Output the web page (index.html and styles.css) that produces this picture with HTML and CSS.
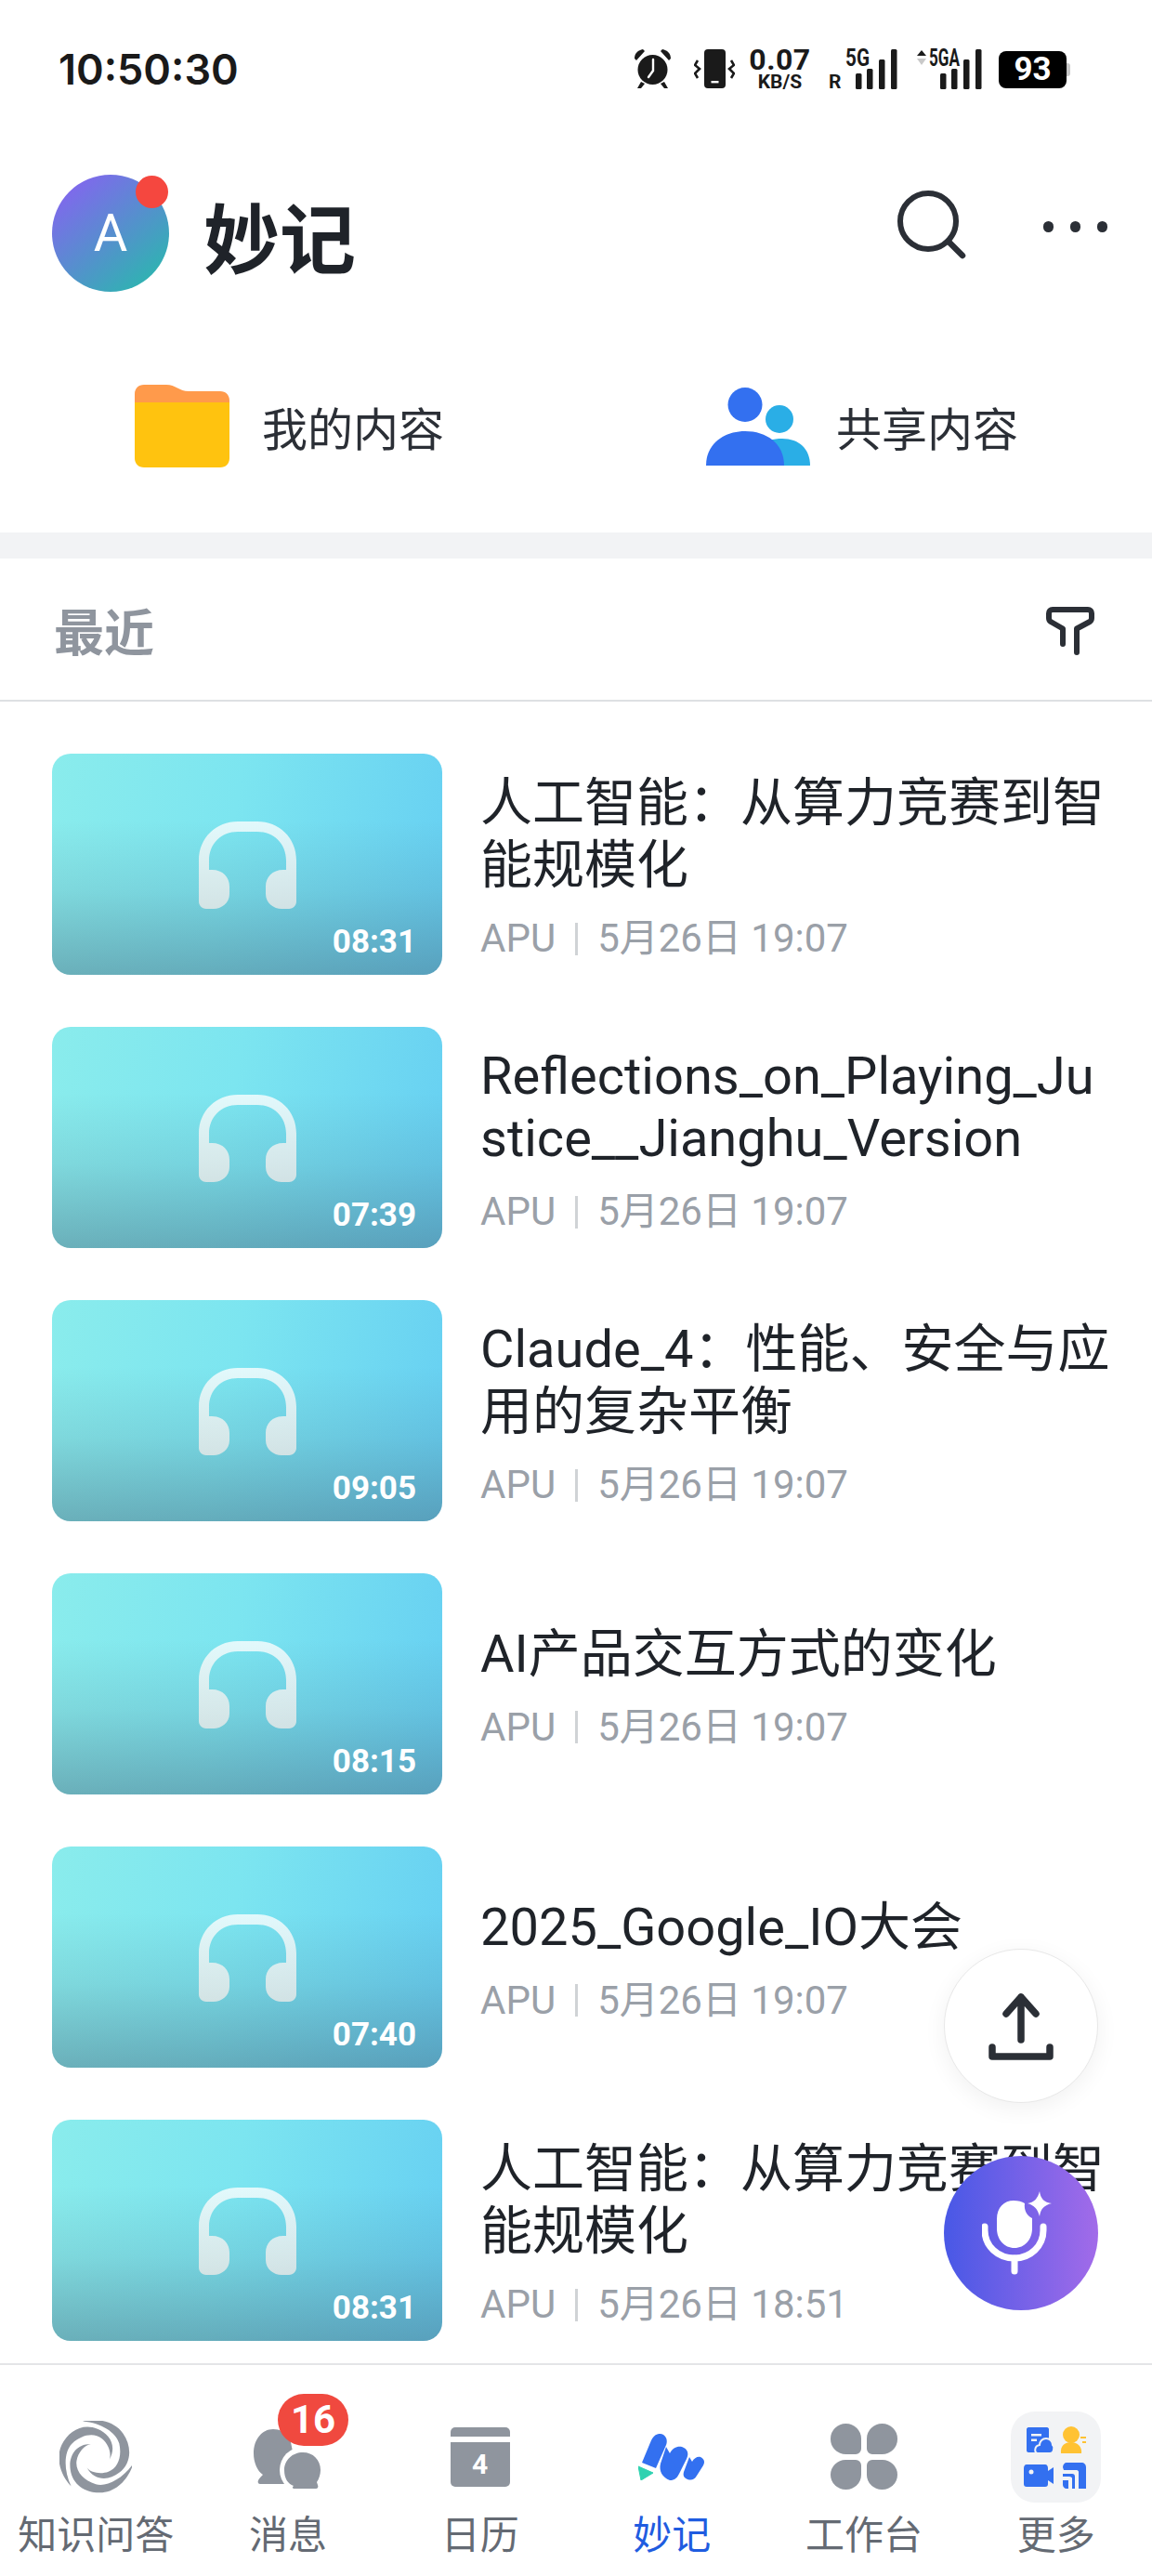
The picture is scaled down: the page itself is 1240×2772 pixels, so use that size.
FILE: index.html
```html
<!DOCTYPE html>
<html lang="zh-CN">
<head>
    <meta charset="UTF-8">
    <meta name="viewport" content="width=device-width, initial-scale=1.0">
    <title>妙记</title>
    <link rel="stylesheet" href="styles.css">
</head>
<body>
    <svg class="defs" width="0" height="0">
        <symbol id="phones" viewBox="0 0 105 94">
            <defs>
                <linearGradient id="phonesFill" x1="0" y1="0" x2="0" y2="1">
                    <stop offset="0" stop-color="#fff" stop-opacity=".78"/>
                    <stop offset="1" stop-color="#eeeae8" stop-opacity=".78"/>
                </linearGradient>
            </defs>
            <path fill="url(#phonesFill)" d="M0 86V42C0 17 19 0 42 0H63C86 0 105 17 105 42V86C105 90 102 94 97 94H89C81 94 72 88 72 78V70C72 60 79 52 91 52H94V42C94 24 81 11 63 11H42C24 11 11 24 11 42V52H14C26 52 33 60 33 70V78C33 88 24 94 16 94H8C3 94 0 90 0 86Z"/>
        </symbol>
        <symbol id="blade" viewBox="0 0 78 78" overflow="visible">
            <path d="M25.700 2.400C40 -1 58 2 67 15C76 28 76 45 63 55C53 63 38 64 30 50C34 55 44 57 52 54C62 50 66 38 63 25C60 14 45 4 25.700 2.400Z"/>
        </symbol>
    </svg>

    <div class="app">
        <div class="statusbar">
            <div class="clock">10:50:30</div>
            <div class="status-icons">
                <svg class="ic-alarm" width="43" height="44" viewBox="0 0 43 44">
                    <circle cx="21.500" cy="23" r="16" fill="#1a1a1a"/>
                    <path d="M2 11C2 5 6 2 11 1L13 3 4 13Z M41 11C41 5 37 2 32 1L30 3 39 13Z" fill="#1a1a1a"/>
                    <path d="M9 36L5 43H9L13 38Z M34 36L38 43H34L30 38Z" fill="#1a1a1a"/>
                    <path d="M22 12V24L17 31" fill="none" stroke="#fff" stroke-width="2.400" stroke-linecap="round"/>
                </svg>
                <svg class="ic-vibrate" width="44" height="42" viewBox="0 0 44 42">
                    <rect x="11" y="0" width="23" height="42" rx="4" fill="#1a1a1a"/>
                    <rect x="18.500" y="34" width="8" height="2.400" fill="#fff"/>
                    <path d="M4 12L1 17 6 21 1 26 4 31M40 12L43 17 38 21 43 26 40 31" fill="none" stroke="#1a1a1a" stroke-width="2.600"/>
                </svg>
                <div class="speed">
                    <span class="speed-num">0.07</span>
                    <span class="speed-unit">KB/S</span>
                </div>
                <svg class="ic-net ic-net1" width="74" height="44" viewBox="0 0 74 44">
                    <text x="0" y="43" class="net-r">R</text>
                    <text x="18" y="19" class="net-g" textLength="26" lengthAdjust="spacingAndGlyphs">5G</text>
                    <rect x="29" y="27" width="6.500" height="17" rx="1.500"/>
                    <rect x="41" y="22" width="6.500" height="22" rx="1.500"/>
                    <rect x="54" y="12" width="6.500" height="32" rx="1.500"/>
                    <rect x="67" y="1" width="6.500" height="43" rx="1.500"/>
                </svg>
                <svg class="ic-net ic-net2" width="71" height="44" viewBox="0 0 71 44">
                    <path d="M1 8L6 2 11 8Z" fill="#1a1a1a"/>
                    <path d="M1 11L6 18 11 11Z" fill="#c9c9c9"/>
                    <text x="14" y="19" class="net-g" textLength="33" lengthAdjust="spacingAndGlyphs">5GA</text>
                    <rect x="26" y="27" width="6.500" height="17" rx="1.500"/>
                    <rect x="38" y="22" width="6.500" height="22" rx="1.500"/>
                    <rect x="51" y="12" width="6.500" height="32" rx="1.500"/>
                    <rect x="64" y="1" width="6.500" height="43" rx="1.500"/>
                </svg>
                <div class="battery">93</div>
                <div class="battery-cap"></div>
            </div>
        </div>

        <div class="header">
            <div class="avatar">A<span class="avatar-dot"></span></div>
            <h1 class="title">妙记</h1>
            <svg class="ic-search" width="74" height="74" viewBox="0 0 74 74">
                <circle cx="33" cy="33" r="30" fill="none" stroke="#2b2f36" stroke-width="6"/>
                <path d="M55 55L70 70" stroke="#2b2f36" stroke-width="6.500" stroke-linecap="round"/>
            </svg>
            <div class="more-dots"><i></i><i></i><i></i></div>
        </div>

        <div class="quick">
            <div class="quick-item quick-mine">
                <svg width="102" height="89" viewBox="0 0 102 89">
                    <path d="M0 30V10C0 4 4 0 10 0H34C44 0 48 7 58 7H92C98 7 102 11 102 17V30Z" fill="#ff9a4b"/>
                    <path d="M0 19H102V79C102 85 98 89 92 89H10C4 89 0 85 0 79Z" fill="#ffc30f"/>
                </svg>
                <span class="quick-label">我的内容</span>
            </div>
            <div class="quick-item quick-shared">
                <svg width="112" height="84" viewBox="0 0 112 84">
                    <circle cx="79" cy="34" r="15" fill="#2aaee6"/>
                    <path d="M50 84C50 64 62 55 82 55C100 55 112 66 112 84Z" fill="#2aaee6"/>
                    <circle cx="42" cy="18.500" r="18.500" fill="#3370f0"/>
                    <path d="M0 84C0 60 20 47 42 47C65 47 84 60 84 84Z" fill="#3370f0"/>
                </svg>
                <span class="quick-label">共享内容</span>
            </div>
        </div>

        <div class="band"></div>

        <div class="recent-head">
            <span class="recent-title">最近</span>
            <svg width="52" height="52" viewBox="0 0 52 52">
                <path d="M18 40V23.500L5 16C3.500 15 3 14 3 12V7C3 4.500 4.500 3 7 3H45C47.500 3 49 4.500 49 7V12C49 14 48.500 15 47 16L33 23.500V49" fill="none" stroke="#2b2f36" stroke-width="6" stroke-linecap="round" stroke-linejoin="round"/>
            </svg>
        </div>

        <div class="list">
            <div class="row">
                <div class="thumb"><svg class="phones"><use href="#phones"/></svg><span class="dur">08:31</span></div>
                <div class="info">
                    <div class="name">人工智能：从算力竞赛到智能规模化</div>
                    <div class="meta"><span>APU</span><i class="sep"></i><span>5月26日 19:07</span></div>
                </div>
            </div>
            <div class="row">
                <div class="thumb"><svg class="phones"><use href="#phones"/></svg><span class="dur">07:39</span></div>
                <div class="info">
                    <div class="name">Reflections_on_Playing_Justice__Jianghu_Version</div>
                    <div class="meta"><span>APU</span><i class="sep"></i><span>5月26日 19:07</span></div>
                </div>
            </div>
            <div class="row">
                <div class="thumb"><svg class="phones"><use href="#phones"/></svg><span class="dur">09:05</span></div>
                <div class="info">
                    <div class="name">Claude_4：性能、安全与应用的复杂平衡</div>
                    <div class="meta"><span>APU</span><i class="sep"></i><span>5月26日 19:07</span></div>
                </div>
            </div>
            <div class="row">
                <div class="thumb"><svg class="phones"><use href="#phones"/></svg><span class="dur">08:15</span></div>
                <div class="info">
                    <div class="name">AI产品交互方式的变化</div>
                    <div class="meta"><span>APU</span><i class="sep"></i><span>5月26日 19:07</span></div>
                </div>
            </div>
            <div class="row">
                <div class="thumb"><svg class="phones"><use href="#phones"/></svg><span class="dur">07:40</span></div>
                <div class="info">
                    <div class="name">2025_Google_IO大会</div>
                    <div class="meta"><span>APU</span><i class="sep"></i><span>5月26日 19:07</span></div>
                </div>
            </div>
            <div class="row">
                <div class="thumb"><svg class="phones"><use href="#phones"/></svg><span class="dur">08:31</span></div>
                <div class="info">
                    <div class="name">人工智能：从算力竞赛到智能规模化</div>
                    <div class="meta"><span>APU</span><i class="sep"></i><span>5月26日 18:51</span></div>
                </div>
            </div>
        </div>

        <div class="fab fab-upload">
            <svg width="70" height="74" viewBox="0 0 70 74">
                <path d="M35 6V52M19 24L35 6 51 24" fill="none" stroke="#2b2f36" stroke-width="7.500" stroke-linecap="round" stroke-linejoin="round"/>
                <path d="M4 60V70H66V60" fill="none" stroke="#2b2f36" stroke-width="7.500" stroke-linecap="round" stroke-linejoin="round"/>
            </svg>
        </div>
        <div class="fab fab-mic">
            <svg width="84" height="90" viewBox="0 0 84 90">
                <path d="M16 30C16 17 24 10 34 10C39 10 43 11 46 13C45 20 48 26 54 29V40C54 52 46 61 35 61C24 61 16 52 16 40Z" fill="#fff"/>
                <path d="M3 38V42C3 59 17 72 35 72C52 72 66 59 66 42V38" fill="none" stroke="#fff" stroke-width="7" stroke-linecap="round"/>
                <path d="M35 72V86" stroke="#fff" stroke-width="7" stroke-linecap="round"/>
                <path d="M62 0C63 8 67 12 75 13C67 15 63 19 62 27C60 19 56 15 49 13C56 12 60 8 62 0Z" fill="#fff"/>
            </svg>
        </div>

        <div class="nav">
            <div class="tab">
                <div class="tab-icon">
                    <svg width="78" height="78" viewBox="2 2 74 74">
                        <g fill="#8f959e">
                            <use href="#blade" width="78" height="78"/>
                            <use href="#blade" width="78" height="78" transform="rotate(120 39 39)"/>
                            <use href="#blade" width="78" height="78" transform="rotate(240 39 39)"/>
                        </g>
                    </svg>
                </div>
                <span class="tab-label">知识问答</span>
            </div>
            <div class="tab">
                <div class="tab-icon tab-msg">
                    <svg width="74" height="66" viewBox="0 0 74 66">
                        <path d="M22 1C10 1 1 12 1 27C1 37 5 46 11 50C9 52 7 54 6 56C5 58 6 60 8 60H44V30L40 10C35 4 29 1 22 1Z" fill="#8f959e"/>
                        <circle cx="54" cy="45" r="25" fill="#fff"/>
                        <path d="M54 26C43 26 34 34 34 45C34 54 38 60 44 62C43 63 42 64 44 65H68C70 65 71 63 70 61L69 58C71 55 73 50 73 45C73 34 65 26 54 26Z" fill="#8f959e"/>
                    </svg>
                    <span class="badge">16</span>
                </div>
                <span class="tab-label">消息</span>
            </div>
            <div class="tab">
                <div class="tab-icon">
                    <div class="cal">
                        <div class="cal-top"></div>
                        <div class="cal-body">4</div>
                    </div>
                </div>
                <span class="tab-label">日历</span>
            </div>
            <div class="tab">
                <div class="tab-icon">
                    <svg width="72" height="50" viewBox="0 0 72 50">
                        <path d="M4 31L14 7C17 1 20 0 24 0C30 1 32 7 30 12L19 37Z" fill="#3370f0"/>
                        <path d="M24 32L30 14 34 21C37 15 42 13 47 14C53 16 55 21 52 27L44 43C41 49 38 50 34 50C26 47 22 40 24 32Z" fill="#3370f0"/>
                        <path d="M49 41L55 25 58 30C60 26 64 24 67 25C71 27 72 30 70 34L63 45C60 50 57 50 53 49C49 47 48 45 49 41Z" fill="#3370f0"/>
                        <path d="M0 35L16 42 3 50Z" fill="#2fd2b0" stroke="#2fd2b0" stroke-linejoin="round"/>
                    </svg>
                </div>
                <span class="tab-label tab-on">妙记</span>
            </div>
            <div class="tab">
                <div class="tab-icon">
                    <div class="petals"><i></i><i></i><i></i><i></i></div>
                </div>
                <span class="tab-label">工作台</span>
            </div>
            <div class="tab">
                <div class="tab-icon">
                    <div class="more-tile">
                        <svg width="97" height="98" viewBox="0 0 97 98">
                            <g fill="#3370f0">
                                <path d="M17 19C17 18 18 17 19 17H39C40 17 41 18 41 19V44H19C18 44 17 43 17 42Z"/>
                                <path d="M22 24H33V26.500H22ZM22 29.500H28V32H22Z" fill="#f2f3f5"/>
                                <path d="M31 36A7 7 0 0 1 38 29A7 7 0 0 1 45 36C47 37 47 45 42 45H29C25 45 25 37 31 36Z" stroke="#f2f3f5" stroke-width="2"/>
                                <path d="M14 61C14 59 15 57 17 57H37C39 57 40 59 40 61V64L46 60V78L40 74V78C40 80 39 81 37 81H17C15 81 14 80 14 78Z"/>
                                <circle cx="22" cy="65" r="2.500" fill="#f2f3f5"/>
                                <path d="M56 60C56 57 58 55 60 55H76C79 55 81 57 81 60V83H73V65C73 64 72 63 71 63H57ZM56 67H66C68 67 69 68 69 70V83H60C58 83 56 81 56 79Z"/>
                                <path d="M56 70H63C65 70 66 71 66 72V83H62V74H56Z" fill="#f2f3f5"/>
                            </g>
                            <g fill="#ffc233">
                                <circle cx="65" cy="25" r="9"/>
                                <path d="M54 45C53 37 58 33 65 33C72 33 77 38 76 45Z"/>
                                <path d="M75 27H81V29H75ZM77 32H81V34H77Z"/>
                            </g>
                        </svg>
                    </div>
                </div>
                <span class="tab-label">更多</span>
            </div>
        </div>
    </div>
</body>
</html>
```

FILE: styles.css
```css
* {
    box-sizing: border-box;
}
body {
    margin: 0;
    background-color: #fff;
    font-family: Roboto, "Noto Sans CJK SC", sans-serif;
    color: #1f2329;
}
.defs {
    display: block;
    height: 0;
}
.app {
    position: relative;
    width: 1240px;
    height: 2772px;
    display: flex;
    flex-direction: column;
    overflow: hidden;
}

/* status bar */
.statusbar {
    height: 155px;
    padding: 52px 88px 0 63px;
    display: flex;
    justify-content: space-between;
    align-items: flex-start;
}
.clock {
    font-family: Inter, sans-serif;
    font-size: 45px;
    font-weight: 600;
    line-height: 46px;
    color: #1a1a1a;
}
.status-icons {
    display: flex;
    align-items: flex-start;
    color: #1a1a1a;
}
.ic-vibrate {
    margin: 1px 0 0 23px;
}
.speed {
    margin-left: 16px;
    width: 65px;
    display: flex;
    flex-direction: column;
    align-items: center;
    font-weight: 700;
}
.speed-num {
    font-size: 32px;
    line-height: 24px;
    letter-spacing: 0.5px;
}
.speed-unit {
    font-size: 21px;
    line-height: 19px;
    margin-top: 3px;
}
.ic-net {
    margin-left: 20px;
    fill: #1a1a1a;
    overflow: visible;
}
.net-r {
    font-size: 21px;
    font-weight: 700;
}
.net-g {
    font-size: 25px;
    font-weight: 700;
}
.battery {
    margin: 3px 0 0 18px;
    width: 73px;
    height: 40px;
    border-radius: 8px;
    background-color: #000;
    color: #fff;
    font-size: 35px;
    font-weight: 700;
    line-height: 40px;
    text-align: center;
}
.battery-cap {
    margin-top: 16px;
    width: 4px;
    height: 14px;
    border-radius: 0 3px 3px 0;
    background-color: #c8c8c8;
}

/* header */
.header {
    margin-top: 33px;
    height: 126px;
    padding-left: 56px;
    display: flex;
    align-items: center;
}
.avatar {
    position: relative;
    width: 126px;
    height: 126px;
    border-radius: 50%;
    background: linear-gradient(140deg, #8d5cf6, #22bfa8);
    color: #fff;
    font-size: 56px;
    line-height: 126px;
    text-align: center;
}
.avatar-dot {
    position: absolute;
    top: 1px;
    right: 1px;
    width: 35px;
    height: 35px;
    border-radius: 50%;
    background-color: #f5473f;
}
.title {
    margin: 17px 0 0 37px;
    flex: 1;
    font-size: 82px;
    font-weight: 700;
    line-height: 90px;
    color: #1f2329;
}
.ic-search {
    margin: -18px 0 0 0;
}
.more-dots {
    margin: -14px 48px 0 83px;
    display: flex;
    gap: 17.500px;
}
.more-dots i {
    display: block;
    width: 11.500px;
    height: 11.500px;
    border-radius: 50%;
    background-color: #2b2f36;
}

/* my content / shared */
.quick {
    margin-top: 100px;
    height: 159px;
    display: grid;
    grid-template-columns: 620px 620px;
}
.quick-item {
    height: 89px;
    display: flex;
    align-items: center;
    justify-content: center;
    gap: 35px;
}
.quick-mine {
    padding-left: 3px;
}
.quick-shared {
    gap: 28px;
    padding-right: 4px;
}
.quick-label {
    font-size: 49px;
    line-height: 60px;
    margin-top: 10px;
    color: #2b2f36;
}
.band {
    height: 28px;
    background-color: #f2f3f5;
}
.recent-head {
    height: 154px;
    padding: 0 62px 0 58px;
    border-bottom: 2px solid #dee0e3;
    display: flex;
    align-items: center;
    justify-content: space-between;
}
.recent-head svg {
    margin-top: 4px;
}
.recent-title {
    font-size: 54px;
    font-weight: 700;
    line-height: 60px;
    margin-top: 12px;
    color: #8f959e;
}

/* list */
.list {
    flex: 1;
    padding: 56px 40px 0 56px;
    display: flex;
    flex-direction: column;
    gap: 56px;
    overflow: hidden;
}
.row {
    display: flex;
    align-items: center;
    gap: 41px;
}
.thumb {
    position: relative;
    flex: none;
    width: 420px;
    height: 238px;
    border-radius: 20px;
    display: flex;
    align-items: center;
    justify-content: center;
    background:
        linear-gradient(180deg, rgba(70, 100, 120, 0) 30%, rgba(70, 100, 120, 0.14) 62%, rgba(70, 100, 120, 0.44) 100%),
        linear-gradient(100deg, #8aecec 0%, #7ce5f0 45%, #66cff2 100%);
}
.phones {
    width: 105px;
    height: 94px;
    margin-top: 2px;
}
.dur {
    position: absolute;
    right: 28px;
    bottom: 15px;
    font-size: 35px;
    font-weight: 700;
    line-height: 40px;
    color: #fff;
}
.info {
    flex: 1;
    min-width: 0;
    padding-top: 6px;
}
.name {
    font-size: 56px;
    line-height: 67px;
    word-break: break-all;
    color: #1f2329;
}
.meta {
    margin-top: 20px;
    height: 50px;
    display: flex;
    align-items: baseline;
    font-size: 42px;
    line-height: 50px;
    color: #9aa0a8;
}
.sep {
    align-self: center;
    width: 3px;
    height: 35px;
    margin: 0 21px 0 21px;
    background-color: #d0d3d6;
}

/* floating buttons */
.fab {
    position: absolute;
    left: 1016px;
    width: 166px;
    height: 166px;
    border-radius: 50%;
    display: flex;
    align-items: center;
    justify-content: center;
}
.fab-upload {
    top: 2097px;
    background-color: #fff;
    border: 1px solid #e8e8e8;
    box-shadow: 0 6px 24px rgba(0, 0, 0, 0.06);
}
.fab-mic {
    top: 2320px;
    background: linear-gradient(90deg, #4858e6, #a26be9);
}

/* bottom nav */
.nav {
    height: 229px;
    border-top: 2px solid #e4e5e7;
    padding-top: 46px;
    background-color: #fff;
    display: grid;
    grid-template-columns: repeat(6, 1fr);
}
.tab {
    display: flex;
    flex-direction: column;
    align-items: center;
}
.tab-icon {
    position: relative;
    height: 105px;
    width: 120px;
    display: flex;
    align-items: center;
    justify-content: center;
}
.tab-label {
    margin-top: 8px;
    font-size: 42px;
    line-height: 50px;
    white-space: nowrap;
    color: #646a73;
}
.tab-on {
    color: #1f5ce0;
}
.tab-msg svg {
    margin: 4px 0 0 -2px;
}
.badge {
    position: absolute;
    top: -15px;
    left: 49px;
    width: 76px;
    height: 56px;
    border-radius: 28px;
    background-color: #f0493f;
    color: #fff;
    font-size: 42px;
    font-weight: 700;
    line-height: 56px;
    text-align: center;
}
.cal {
    width: 64px;
    height: 64px;
}
.cal-top {
    height: 10px;
    border-radius: 5px 5px 0 0;
    background-color: #8f959e;
}
.cal-body {
    margin-top: 6px;
    height: 48px;
    border-radius: 0 0 5px 5px;
    background-color: #8f959e;
    color: #fff;
    font-size: 30px;
    font-weight: 700;
    line-height: 48px;
    text-align: center;
}
.petals {
    display: grid;
    grid-template-columns: 33px 33px;
    gap: 6px;
}
.petals i {
    display: block;
    height: 32.500px;
    background-color: #8f959e;
}
.petals i:nth-child(1) {
    border-radius: 50% 50% 6px 50%;
}
.petals i:nth-child(2) {
    border-radius: 50% 50% 50% 6px;
}
.petals i:nth-child(3) {
    border-radius: 50% 6px 50% 50%;
}
.petals i:nth-child(4) {
    border-radius: 6px 50% 50% 50%;
}
.more-tile {
    width: 97px;
    height: 98px;
    border-radius: 26px;
    background-color: #f2f3f5;
}
.more-tile svg {
    display: block;
}
```
